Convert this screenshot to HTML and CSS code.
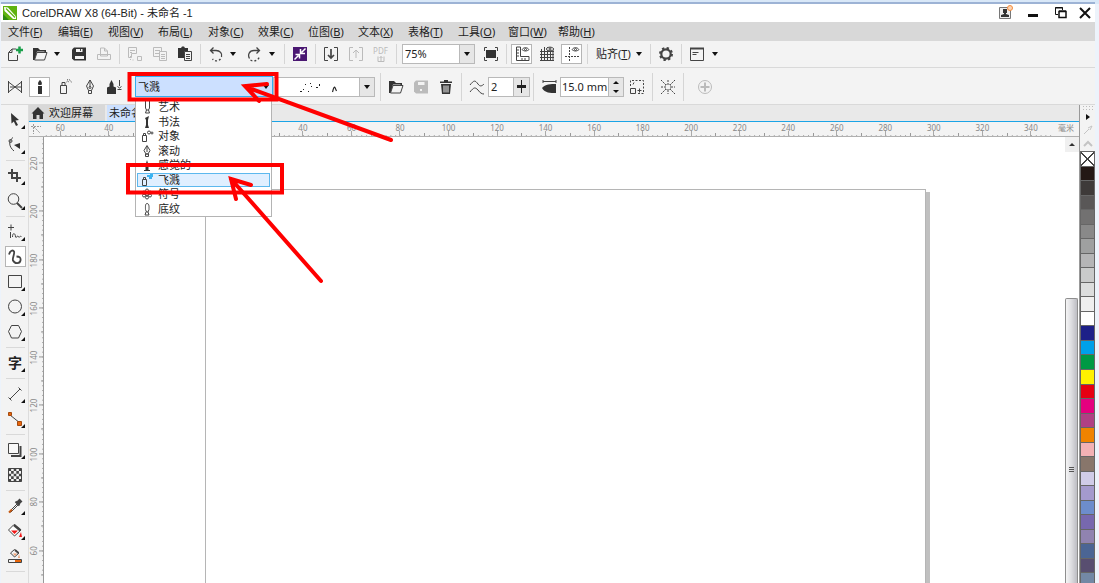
FILE: index.html
```html
<!DOCTYPE html>
<html lang="zh-CN">
<head>
<meta charset="utf-8">
<title>CorelDRAW X8 (64-Bit) - 未命名 -1</title>
<link rel="stylesheet" href="styles.css">
</head>
<body>
<div class="app">
  <header class="titlebar">
    <svg class="logo" viewBox="0 0 14 14"><path fill="#5fb30f" d="M0 0h14v14H0z"/><path fill="#fff" d="M1 1l4 0.500 8 9v2.500h-3L1.500 5z"/><path stroke="#5fb30f" stroke-width="1.200" d="M3 2.500l9 9"/><path fill="#2f8a12" d="M0 8l6 6H0z"/></svg>
    <h1 class="title">CorelDRAW X8 (64-Bit) - 未命名 -1</h1>
    <button class="win" aria-label="账户"><svg class="i" viewBox="0 0 20 20"><path class="g" d="M4.500 4.500h11v11h-11z" fill="#eee"/><path class="f" d="M8 6h4v4h-1v1l3 1v2H6v-2l3-1v-1H8z"/><circle cx="15" cy="5" r="2.500" fill="#fbd5b5" stroke="#f58b3c"/></svg></button>
    <button class="win" aria-label="最小化"><svg class="i" viewBox="0 0 20 20"><path class="k" stroke-width="3" d="M5 12.500h10"/></svg></button>
    <button class="win" aria-label="还原"><svg class="i" viewBox="0 0 20 20"><path class="k" d="M7 11.500H4.500v-7h7v2.500M4 5h8" /><path class="k" stroke-width="1.500" d="M8 8.500h7v6H8zM8 8h7"/></svg></button>
    <button class="win" aria-label="关闭"><svg class="i" viewBox="0 0 20 20"><path class="k" stroke-width="2" d="M5 5l10 10M15 5L5 15"/></svg></button>
  </header>
  <nav class="menubar">
    <button>文件(<u>F</u>)</button><button>编辑(<u>E</u>)</button><button>视图(<u>V</u>)</button><button>布局(<u>L</u>)</button><button>对象(<u>C</u>)</button><button>效果(<u>C</u>)</button><button>位图(<u>B</u>)</button><button>文本(<u>X</u>)</button><button>表格(<u>T</u>)</button><button>工具(<u>O</u>)</button><button>窗口(<u>W</u>)</button><button>帮助(<u>H</u>)</button>
  </nav>
  <div class="bar">
    <button class="b" aria-label="新建"><svg class="i" viewBox="0 0 20 20"><path d="M11 5H7L3.500 8.500v8h9V11M7 5v3.500H4"/><path stroke="#19a04a" stroke-width="2.500" d="M14.500 2.500v7M11 6h7"/></svg></button>
    <button class="b" aria-label="打开"><svg class="i" viewBox="0 0 20 20"><path class="f" d="M3 16V4h5l2 2h6v3h-1.500V7.500H7L5 16z"/><path d="M4.500 16L7 8.500h10L14.500 16z" fill="#f3f3f3"/></svg></button>
    <button class="arrow" aria-label="打开选项"></button>
    <button class="b" aria-label="保存"><svg class="i" viewBox="0 0 20 20"><path class="f" d="M5 3.500h12v13H5L3 14.500v-9z"/><path fill="#f3f3f3" stroke="none" d="M7 5h6.500v3H7zM6 12h9v3H6z"/><path d="M11.500 5v2"/></svg></button>
    <button class="b" aria-label="打印" disabled><svg class="i" viewBox="0 0 20 20"><path d="M3.500 10.500h13v5h-13zM6.500 10V4h4l3 3v5h-7zM10.500 4v3h3"/></svg></button>
    <span class="sep"></span>
    <button class="b" aria-label="剪切" disabled><svg class="i" viewBox="0 0 20 20"><path d="M3.500 3.500h8v6h-5v4h-3zM5 6.500h5M5 8.500h2M12.500 12.500h4v4h-4z"/><path stroke-dasharray="1 2" d="M5.500 12v4h5"/></svg></button>
    <button class="b" aria-label="复制" disabled><svg class="i" viewBox="0 0 20 20"><path d="M3.500 3.500h8v9h-8zM5 6.500h5M5 9.500h5"/><path fill="#f3f3f3" d="M9.500 7.500h7v9h-7zM11 10.500h4M11 12.500h4M11 14.500h4"/></svg></button>
    <button class="b" aria-label="粘贴"><svg class="i" viewBox="0 0 20 20"><path class="f" d="M3 4h3l1-1.500h2L10 4h3v10H3z"/><path fill="#f3f3f3" d="M9.500 7.500h7v9h-7zM11 10.500h4M11 12.500h4M11 14.500h4"/></svg></button>
    <span class="sep"></span>
    <button class="b" aria-label="撤消"><svg class="i" viewBox="0 0 20 20"><path stroke-width="1.300" d="M4.500 6.500H10c4 0 6.500 3 5.500 6.500M7.500 3.500l-3 3 3 3"/><path stroke-width="1.300" stroke-dasharray="2 2" d="M14.500 15c-2 2.500-6 2.500-8 0"/></svg></button>
    <button class="arrow" aria-label="撤消列表"></button>
    <button class="b" aria-label="重做"><svg class="i" viewBox="0 0 20 20"><path stroke-width="1.300" d="M14.500 6.500H9c-5 0-6.500 4.500-4.500 8M11.500 3.500l3 3-3 3"/><path stroke-width="1.300" stroke-dasharray="2 2" d="M5.500 16c3 2 7 1 9-3"/></svg></button>
    <button class="arrow" aria-label="重做列表"></button>
    <span class="sep"></span>
    <button class="b" aria-label="搜索内容"><svg class="i" viewBox="0 0 20 20"><path fill="#4a1772" stroke="none" d="M3 3h14v14H3z"/><path stroke="#fff" stroke-width="1.500" d="M4.500 15.500l4-4M15.500 4.500l-4 4M5.500 10.500h4v4M10.500 5v4.500h4.500"/></svg></button>
    <span class="sep"></span>
    <button class="b" aria-label="导入"><svg class="i" viewBox="0 0 20 20"><path d="M7 3.500H3.500v13H7M13 3.500h3.500v13H13"/><path stroke-width="1.700" d="M10 5v9M7 11l3 3 3-3"/></svg></button>
    <button class="b" aria-label="导出" disabled><svg class="i" viewBox="0 0 20 20"><path d="M7 3.500H3.500v13H7M13 3.500h3.500v13H13"/><path d="M10 14V6M7 9l3-3 3 3"/></svg></button>
    <button class="b pdf" disabled>PDF<svg class="mini" viewBox="0 0 8 7"><path d="M1 1.500v5h6v-5M4 6V1.500M2.500 3L4 1.500 5.500 3"/></svg></button>
    <span class="sep"></span>
    <div class="field zoom"><input aria-label="缩放级别" value="75%"><button class="drop" aria-label="缩放列表"></button></div>
    <button class="b" aria-label="全屏预览"><svg class="i" viewBox="0 0 20 20"><path class="f" d="M5 6h10v8H5z"/><path d="M3.500 7V3.500H6M14 3.500h2.500V7M16.500 13v3.500H14M6 16.500H3.500V13"/></svg></button>
    <span class="sep"></span>
    <button class="b on" aria-label="显示标尺"><svg class="i" viewBox="0 0 20 20"><path d="M4.500 3v13.500H17V12.500H8.500V3zM5 6h2M5 9h2M5 12h2M10 14v2M13 14v2"/><path d="M10 5.500c2-2.500 5-2.500 7 0-2 2-5 2-7 0z"/><circle cx="13.500" cy="5.500" r="1"/></svg></button>
    <button class="b" aria-label="显示网格"><svg class="i" viewBox="0 0 20 20"><path d="M3 7.500h14M3 10.500h14M3 13.500h14M3 16.500h14M4.500 5v12M7.500 3v14M10.500 3v14M13.500 3v14M16 5v12"/><path fill="#f3f3f3" d="M9 5c2-2.500 6-2.500 8 0-2 2.500-6 2.500-8 0z"/><circle cx="13" cy="5" r="1"/></svg></button>
    <button class="b on" aria-label="显示辅助线"><svg class="i" viewBox="0 0 20 20"><path stroke-dasharray="2 1" d="M3 12.500h14M7.500 3v14"/><path d="M10 5.500c2-2.500 5-2.500 7 0-2 2-5 2-7 0z"/><circle cx="13.500" cy="5.500" r="1"/></svg></button>
    <span class="sep"></span>
    <button class="snap">贴齐(<u>T</u>)</button>
    <button class="arrow" aria-label="贴齐选项"></button>
    <span class="sep"></span>
    <button class="b" aria-label="选项"><svg class="i" viewBox="0 0 20 20"><circle cx="10" cy="10" r="4.700" stroke-width="2.200"/><circle cx="10" cy="10" r="6" stroke-width="2" stroke-dasharray="2.350 2.350"/></svg></button>
    <span class="sep"></span>
    <button class="b" aria-label="应用程序启动器"><svg class="i" viewBox="0 0 20 20"><path d="M3.500 4.500h13v12h-13zM5.500 8.500h6M5.500 10.500h4" /><path stroke-width="2" d="M3 4.500h14"/></svg></button>
    <button class="arrow" aria-label="启动器列表"></button>
  </div>
  <div class="bar props">
    <button class="b" aria-label="预设"><svg class="i" viewBox="0 0 20 20"><path d="M3.500 4v12M3.500 5l6.500 5-6.500 5M16.500 4v12M16.500 5L10 10l6.500 5M5 10h11"/></svg></button>
    <button class="b on" aria-label="笔刷"><svg class="i" viewBox="0 0 20 20"><path class="f" d="M8 9h4v8H8zM10 3c2.500 2.500 2 3.500 1.500 5h-3C8 6.500 7.500 5.500 10 3z"/></svg></button>
    <button class="b" aria-label="喷涂"><svg class="i" viewBox="0 0 20 20"><path d="M5.500 8.500h6v8h-6zM7 8V5.500h3V8"/><path stroke-dasharray="1 1" d="M11.500 5c1-1 2-1 3 1M12 3c2-1 4 0 4.500 3"/></svg></button>
    <button class="b" aria-label="书法"><svg class="i" viewBox="0 0 20 20"><path d="M10 3L6.500 9l2 4.500h3l2-4.500zM10 3v7M8.500 13.500v3h3v-3"/><circle cx="10" cy="10.500" r="1"/></svg></button>
    <button class="b" aria-label="压力"><svg class="i" viewBox="0 0 20 20"><path class="f" d="M6.500 3l2 4v2.500l2.500 1V17H2v-6.500l2.500-1V7z"/><path d="M14.500 3v6M12.500 9.500l2 1.500 2-1.500M12.500 12.500h4"/></svg></button>
    <div class="category">
      <button class="combo" role="combobox" aria-expanded="true" aria-controls="kinds" aria-label="类别">飞溅</button>
      <ul class="list" id="kinds" role="listbox">
        <li role="option"><svg class="s" viewBox="0 0 14 14"><path d="M5.500 1v7l1 2h2l1-2V1M6.500 10l-1 3h4l-1-3"/></svg>艺术</li>
        <li role="option"><svg class="s" viewBox="0 0 14 14"><path class="f" d="M5 3l4-2-1 4v5l1 3H5l1-3V5z"/></svg>书法</li>
        <li role="option"><svg class="s" viewBox="0 0 14 14"><path d="M2.500 6.500h4v6h-4zM3.500 6V4.500h2V6"/><circle cx="9" cy="3.500" r="1.500"/><circle cx="12" cy="4" r="1"/></svg>对象</li>
        <li role="option"><svg class="s" viewBox="0 0 14 14"><path d="M7 1.500L4 6.500l2 3.500h2l2-3.500zM7 2v6M5.500 12.500h3V10h-3z"/></svg>滚动</li>
        <li role="option"><svg class="s" viewBox="0 0 14 14"><path class="f" d="M7 2l1.500 5v6h-3V7zM4 12h6v1H4z"/></svg>感觉的</li>
        <li role="option" aria-selected="true"><svg class="s" viewBox="0 0 14 14"><path d="M2.500 6.500h4v6h-4zM3.500 6V4.500h2V6"/><path fill="#3bb3f0" stroke="none" d="M7 2h3v2H7zM10 1h3v3h-3zM9 4h3v2H9z"/></svg>飞溅</li>
        <li role="option"><svg class="s" viewBox="0 0 14 14"><circle cx="7" cy="7" r="1.500"/><circle cx="7" cy="3.500" r="1.500"/><circle cx="7" cy="10.500" r="1.500"/><circle cx="4" cy="5.500" r="1.500"/><circle cx="10" cy="5.500" r="1.500"/><circle cx="4" cy="8.500" r="1.500"/><circle cx="10" cy="8.500" r="1.500"/></svg>符号</li>
        <li role="option"><svg class="s" viewBox="0 0 14 14"><path d="M7 1.500c-2 0-1.500 4-1.500 6l1 2.500h1.500l1-2.500c0-2 0.500-6-2-6zM6 10l-1 3h4l-1-3"/></svg>底纹</li>
      </ul>
    </div>
    <div class="field pattern"><button class="swatch" aria-label="喷射图样"><svg class="splash" viewBox="0 0 64 18"><path fill="#222" d="M15 13h2v1h-2zM20 6h1v1h-1zM18 11h1v1h-1zM23 13h1v1h-1zM25 5h1v1h-1zM26 8h1v1h-1zM34 6h1v2h-1zM31 9h2v1h-2z"/><path d="M47.500 14c1-3 1-5 2-5 1 1 1 2 2 4" fill="none" stroke="#222" stroke-width="1.200"/></svg></button><button class="drop" aria-label="图样列表"></button></div>
    <span class="sep"></span>
    <button class="b" aria-label="浏览"><svg class="i" viewBox="0 0 20 20"><path class="f" d="M3 16V4h5l2 2h6v3h-1.500V7.500H7L5 16z"/><path d="M4.500 16L7 8.500h10L14.500 16z" fill="#f3f3f3"/></svg></button>
    <button class="b" aria-label="保存笔触" disabled><svg class="i" viewBox="0 0 20 20"><path class="f" d="M5 3.500h12v13H5L3 14.500v-9z"/><path fill="#f3f3f3" stroke="none" d="M7 5h6.500v3H7zM9 12h2v2H9z"/></svg></button>
    <button class="b" aria-label="删除"><svg class="i" viewBox="0 0 20 20"><path class="f" d="M5 7h10l-1 10H6zM4 4.500h12V6H4zM8 3h4v1.500H8z"/><path stroke="#f3f3f3" d="M8 8.500v7M10 8.500v7M12 8.500v7"/></svg></button>
    <span class="sep"></span>
    <svg class="i lead" viewBox="0 0 20 20"><path d="M3 8c4-5 5-5 8-1 2 3 4 2 6 0M3 15c4-5 5-5 8-2 2 3 4 4 6 4"/></svg>
    <div class="field smooth"><input aria-label="手绘平滑" value="2"><button class="slide" aria-label="平滑滑块"></button></div>
    <span class="sep"></span>
    <svg class="i lead" viewBox="0 0 20 20"><path d="M4 4.500h13M4 3v3M17 3v3"/><path class="f" d="M3 11c3-4 9-4 14-4v9C11 16 6 16 3 11z"/></svg>
    <div class="field width"><input aria-label="笔触宽度" value="15.0 mm"><span class="spin"><button aria-label="增加"></button><button aria-label="减少"></button></span></div>
    <button class="b" aria-label="随对象缩放笔触"><svg class="i" viewBox="0 0 20 20"><path stroke-dasharray="2 1.500" d="M3.500 9V3.500h13v13H10"/><path d="M3.500 11.500h5v5h-5zM10.500 13.500h4M12.500 11.500v4M6 7.500l1-2"/></svg></button>
    <span class="sep"></span>
    <button class="b" aria-label="边框"><svg class="i" viewBox="0 0 20 20"><path stroke-dasharray="2 1" d="M3 3l5 5M17 3l-5 5M3 17l5-5M17 17l-5-5M10 3v4M10 13v4M3 10h4M13 10h4"/><path stroke-dasharray="1 1" d="M7.500 7.500h5v5h-5z"/></svg></button>
    <span class="sep"></span>
    <button class="b far" aria-label="添加" disabled><svg class="i" viewBox="0 0 20 20"><circle cx="10" cy="10" r="6.500"/><path stroke-width="2" d="M10 5.500v9M5.500 10h9"/></svg></button>
  </div>
  <div class="work">
    <aside class="toolbox">
      <button class="t more" aria-label="选择"><svg class="i" viewBox="0 0 20 20"><path class="f" d="M6 3l8 7-3.500 0.500L13 15l-2 1-2.200-4.500L6.500 13.500z"/></svg></button>
      <button class="t more" aria-label="形状"><svg class="i" viewBox="0 0 20 20"><path d="M8 2.500C3 6 4 12 9 16"/><circle cx="5.500" cy="6" r="1.500"/><path class="f" d="M9 10l6-2v6z"/></svg></button>
      <span class="hr"></span>
      <button class="t more" aria-label="裁剪"><svg class="i" viewBox="0 0 20 20"><path stroke-width="2" d="M3 7h9v9M7 3v9h9"/></svg></button>
      <button class="t more" aria-label="缩放"><svg class="i" viewBox="0 0 20 20"><circle cx="8.500" cy="8" r="5.300"/><path stroke-width="2" d="M12 12l5 5"/></svg></button>
      <span class="hr"></span>
      <button class="t more" aria-label="手绘"><svg class="i" viewBox="0 0 20 20"><path d="M3 5.500h6M6 2.500v6M5.500 10v6M7.500 15c0-5 3-4 3 0 1 2 2-3 3 0 1 1 2-2 3 0"/></svg></button>
      <button class="t on" aria-label="艺术笔"><svg class="i" viewBox="0 0 20 20"><path stroke-width="1.800" d="M4 7.500c1-4 4-5 5-3 1 2-2 7-1 9 2 4 7 3 7.500 0 0.500-3-1-4-4-4"/></svg></button>
      <button class="t more" aria-label="矩形"><svg class="i" viewBox="0 0 20 20"><path d="M3.500 3.500h13v12h-13z"/></svg></button>
      <button class="t more" aria-label="椭圆形"><svg class="i" viewBox="0 0 20 20"><circle cx="10" cy="9.500" r="6.500"/></svg></button>
      <button class="t more" aria-label="多边形"><svg class="i" viewBox="0 0 20 20"><path d="M6.500 3.500h7l3 6-3 6.500h-7l-3-6.500z"/></svg></button>
      <span class="hr"></span>
      <button class="t more glyph" aria-label="文本">字</button>
      <span class="hr"></span>
      <button class="t more" aria-label="平行度量"><svg class="i" viewBox="0 0 20 20"><path d="M5 15L15 5M3.500 13.500l3 3M13.500 3.500l3 3"/></svg></button>
      <button class="t more" aria-label="连接器"><svg class="i" viewBox="0 0 20 20"><path d="M5 6l10 8"/><path fill="#e8650a" stroke="#a34a10" d="M3.500 3.500h3v3h-3zM12.500 12.500h4v4h-4z"/></svg></button>
      <span class="hr"></span>
      <button class="t more" aria-label="阴影"><svg class="i" viewBox="0 0 20 20"><path stroke-width="2" d="M15.500 6v10H6"/><path d="M3.500 3.500h10v10h-10z" fill="#f8f8f8"/></svg></button>
      <button class="t" aria-label="透明度"><svg class="i" viewBox="0 0 20 20"><path d="M3.500 3.500h13v13h-13z"/><path stroke-width="2.600" stroke-dasharray="2.600 2.600" d="M3.500 4.800h13M3.500 10h13M3.500 15.200h13"/><path stroke-width="2.600" stroke-dasharray="2.600 2.600" stroke-dashoffset="2.600" d="M3.500 7.400h13M3.500 12.600h13"/></svg></button>
      <span class="hr"></span>
      <button class="t more" aria-label="颜色滴管"><svg class="i" viewBox="0 0 20 20"><path d="M4.500 15.500l8-8M5.500 16.500l8-8"/><path stroke="#c65a14" stroke-width="2" d="M4 16.500l3-3"/><path stroke-width="4" d="M12.500 7.500L16 4"/><path stroke-width="2" d="M10.500 5.500l4 4"/></svg></button>
      <button class="t more" aria-label="交互式填充"><svg class="i" viewBox="0 0 20 20"><path d="M9 3.500L3.500 9l6 6L16 9z" fill="#fff"/><path stroke-width="2.500" d="M9 4l6.500 5.500"/><path fill="#f01818" stroke="none" d="M6 9.500h7L9.500 13zM16 11l1 5h-3z"/></svg></button>
      <button class="t" aria-label="智能填充"><svg class="i" viewBox="0 0 20 20"><path d="M9.500 3.500L5.500 7l4 4 4.500-4z"/><path stroke-width="2" d="M10 4l3.500 3"/><path fill="#f0a070" stroke="none" d="M8 7.500h4l-2 2.500zM14 8l1 4h-2z"/><path d="M3.500 13.500h13v3h-13z"/><path fill="#e8650a" stroke="none" d="M10 14h6v2h-6z"/></svg></button>
      <span class="hr"></span>
    </aside>
    <main class="doc">
      <div class="tabs">
        <button class="tab"><svg class="home" viewBox="0 0 14 14"><path d="M7 1l6.500 6.500H12V13H8.500V9h-3v4H2V7.500H0.500z"/></svg>欢迎屏幕</button>
        <button class="tab current">未命名 -1</button>
      </div>
      <div class="hruler">
        <span class="corner"><svg class="s" viewBox="0 0 14 14"><path stroke="#999" stroke-dasharray="2 1" d="M2 4.500h10M4.500 2v10M5 5l6 6"/></svg></span>
        <div class="hscale"><span>60</span><span>40</span><span></span><span></span><span></span><span>40</span><span>60</span><span>80</span><span>100</span><span>120</span><span>140</span><span>160</span><span>180</span><span>200</span><span>220</span><span>240</span><span>260</span><span>280</span><span>300</span><span>320</span><span>340</span></div>
        <span class="unit">毫米</span>
      </div>
      <div class="stage">
        <div class="vruler"><span>220</span><span>200</span><span>180</span><span>160</span><span>140</span><span>120</span><span>100</span><span>80</span><span>60</span></div>
        <div class="canvas"><div class="page"></div></div>
        <div class="scroll"><button class="up" aria-label="向上滚动"></button><div class="thumb"></div></div>
      </div>
    </main>
    <aside class="palette">
      <span class="dots"></span>
      <button class="play" aria-label="调色板菜单"></button>
      <svg class="pi" viewBox="0 0 14 14"><path d="M3 11l5-5M7 5l4-2-2 4"/></svg>
      <svg class="pi" viewBox="0 0 14 14"><path stroke-width="2" d="M3 9l4-4 4 4"/></svg>
      <div class="colors">
        <i class="none"></i><i style="background:#231815"></i><i style="background:#3e3a39"></i><i style="background:#595757"></i><i style="background:#727171"></i><i style="background:#898989"></i><i style="background:#9fa0a0"></i><i style="background:#b5b5b6"></i><i style="background:#c9caca"></i><i style="background:#dcdddd"></i><i style="background:#efefef"></i><i style="background:#ffffff"></i><i style="background:#1d2088"></i><i style="background:#00a0e9"></i><i style="background:#009944"></i><i style="background:#fff100"></i><i style="background:#e60012"></i><i style="background:#e4007f"></i><i style="background:#b04084"></i><i style="background:#f08300"></i><i style="background:#f3b1b4"></i><i style="background:#88766b"></i><i style="background:#d0cce8"></i><i style="background:#a49acd"></i><i style="background:#6d8dcc"></i><i style="background:#7768ae"></i><i style="background:#9083b0"></i><i style="background:#4b6594"></i><i style="background:#584e70"></i><i style="background:#7388a5"></i>
      </div>
    </aside>
  </div>
</div>
<svg class="marks" aria-hidden="true">
  <path d="M129.500 74h147v25.500h-147zM128 165h154v27.500H128z"/>
  <path d="M391 140L246 87M267 84L245 86l14 15M321 281L231 179M251 185l-20-6 5 20"/>
</svg>
</body>
</html>
```
FILE: styles.css
```css
* { box-sizing: border-box; }
body {
  margin: 0;
  height: 100vh;
  overflow: hidden;
  background: #edf3fb;
  font: 11px/14px "Noto Sans", "Noto Sans CJK SC", sans-serif;
  color: #222;
}
button, input { font: inherit; color: inherit; margin: 0; padding: 0; border: 0; background: none; }
button { flex: none; }
.app {
  height: 100%;
  display: flex;
  flex-direction: column;
  padding: 0 4px 0 1px;
  border-top: 4px solid #d9e8f8;
}

/* title and menus */
.titlebar { flex: none; height: 18px; display: flex; align-items: center; background: #fff; padding: 0 0 0 2px; box-shadow: 0 -2px 0 #9db3d5; }
.logo { width: 14px; height: 14px; }
.title { flex: 1; margin: 0; padding-left: 5px; font-family: "Liberation Sans", "Noto Sans CJK SC", sans-serif; font-size: 11px; font-weight: 400; line-height: 18px; }
.win { width: 20px; height: 18px; margin-left: 8px; }
.win .i { display: block; margin-top: -1px; }
.win:last-child { margin-left: 4px; }
.menubar { flex: none; height: 19px; display: flex; padding-left: 7px; background: #d8d8d8; line-height: 19px; }
.menubar button { width: 50px; text-align: left; white-space: nowrap; }

/* icons */
.i { display: block; width: 20px; height: 20px; flex: none; margin: auto; }
.s { width: 14px; height: 14px; flex: none; }
.i, .s { fill: none; stroke: #444; }
.i .f, .s .f { fill: #333; stroke: none; }
.i .g { stroke: #777; }
.i .k { stroke: #111; }
button:disabled { color: #bbb; }
button:disabled .i { stroke: #bbb; }
button:disabled .i .f { fill: #bbb; }

/* toolbars */
.bar { flex: none; height: 27px; display: flex; align-items: center; padding-left: 1px; background: #f3f3f3; border-bottom: 1px solid #d9d9d9; }
.props { height: 37px; padding-top: 1px; }
.b { width: 25px; height: 20px; }
.b.on, .t.on { background: #fff; box-shadow: inset 0 0 0 1px #b5b5b5; }
.b.on { width: 21px; margin: 0 2px; }
.far { margin-left: 6px; }
.arrow { width: 10px; height: 20px; margin-right: 4px; }
.arrow::after, .drop::after, .combo::after, .spin button::after {
  content: ""; display: block; margin: auto; width: 0;
  border: solid transparent; border-width: 4px 3px 0; border-top-color: #111;
}
.sep { flex: none; width: 6px; height: 20px; background: linear-gradient(#d5d5d5, #d5d5d5) center / 1px 100% no-repeat; }
.props .sep { height: 28px; }
.pdf { font-size: 8px; line-height: 9px; }
.mini { display: block; width: 8px; height: 7px; margin: auto; fill: none; stroke: #bbb; }
.snap { padding: 0 3px 0 6px; }
.field { flex: none; display: flex; height: 20px; background: #fff; border: 1px solid #b9b9b9; }
.field input { flex: 1; min-width: 0; padding-left: 2px; outline: 0; }
.drop { width: 15px; background: #e6e6e6; border-left: 1px solid #b9b9b9; }
.zoom { width: 73px; margin: 0 3px; }
.pattern { width: 102px; margin-right: 2px; }
.swatch { flex: 1; display: flex; justify-content: center; }
.splash { width: 64px; height: 18px; }
.lead { margin: 0 1px 0 3px; }
.smooth { width: 42px; }
.slide { width: 16px; background: #e6e6e6; border-left: 1px solid #b9b9b9; }
.slide::after { content: ""; display: block; height: 13px; background: linear-gradient(#222, #222) center / 1px 100% no-repeat, linear-gradient(#222, #222) center / 9px 3px no-repeat; }
.width { width: 64px; }
.field.width input { padding-left: 1px; }
.spin { width: 15px; display: flex; flex-direction: column; background: #e6e6e6; border-left: 1px solid #b9b9b9; }
.spin button { flex: 1; }
.spin button::after { border-width: 3px 3px 0; }
.spin button:first-child::after { border-width: 0 3px 3px; border-bottom-color: #111; }

.category { position: relative; flex: none; width: 138px; margin-left: 8px; z-index: 2; }
.combo { width: 100%; height: 21px; display: flex; align-items: center; padding: 0 3px 0 2px; background: #cce0ff; border: 1px solid #35adf0; text-align: left; }
.combo::after { margin-right: 0; }
.list { position: absolute; top: 23px; left: 0; width: 137px; height: 118px; margin: 0; padding: 0; list-style: none; display: grid; grid-auto-rows: 1fr; background: #fff; border: 1px solid #b4b4b4; }
.list li { display: flex; align-items: center; gap: 4px; min-height: 0; margin: 0 1px; padding-left: 3px; line-height: 14px; }
.list li[aria-selected] { background: #e0efff; box-shadow: inset 0 0 0 1px #5cb8ee; }

/* toolbox */
.work { flex: 1; min-height: 0; display: flex; }
.toolbox { flex: none; width: 28px; display: flex; flex-direction: column; align-items: center; padding: 2px 0 0 1px; background: #f3f3f3; border-right: 1px solid #dcdcdc; overflow: hidden; }
.t { position: relative; width: 21px; height: 25px; }
.t.on { height: 21px; margin: 2px 0; }
.more::after { content: ""; position: absolute; right: 1px; bottom: 3px; border: solid transparent; border-width: 0 0 4px 4px; border-bottom-color: #111; }
.hr { flex: none; width: 19px; height: 6px; background: linear-gradient(#d9d9d9, #d9d9d9) center / 100% 1px no-repeat; }
.glyph { font-size: 14px; font-weight: 700; line-height: 20px; }

/* document */
.doc { flex: 1; min-width: 0; display: flex; flex-direction: column; }
.tabs { flex: none; height: 17px; display: flex; gap: 2px; background: #e9e9e9; border-bottom: 1px solid #1ba4e6; }
.tab { display: flex; align-items: center; gap: 4px; padding: 0 12px 0 2px; background: #d8d8d8; }
.current { background: #cce0ff; }
.home { width: 14px; height: 14px; fill: #333; }
.hruler { flex: none; height: 15px; display: flex; background: #f3f3f3; border-bottom: 1px solid #b0b0b0; color: #888; font-size: 8px; line-height: 12px; }
.corner { width: 15px; background: #f3f3f3; z-index: 1; }
.hscale { flex: 1; display: flex; margin-left: -8px; }
.hscale span {
  flex: 1; text-align: center;
  background:
    linear-gradient(#aaa, #aaa) 50% 100% / 1px 5px no-repeat,
    linear-gradient(#999, #999) 0 100% / 1px 3px no-repeat,
    linear-gradient(90deg, #aaa 1px, transparent 1px) 0 100% / 10% 1px repeat-x;
}
.unit { flex: none; width: 24px; padding-left: 3px; }
.stage { flex: 1; min-height: 0; display: flex; }
.vruler { flex: none; width: 15px; display: flex; flex-direction: column; padding: 2px 0 8px; background: #f3f3f3; border-right: 1px solid #999; color: #888; font-size: 8px; line-height: 10px; }
.vruler span {
  flex: 1; writing-mode: vertical-rl; transform: rotate(180deg); text-align: center;
  background:
    linear-gradient(#999, #999) 0 50% / 4px 1px no-repeat,
    linear-gradient(#999, #999) 0 0 / 2px 1px no-repeat,
    linear-gradient(#aaa 1px, transparent 1px) 0 0 / 1px 10% repeat-y;
}
.canvas { flex: 1; display: flex; padding: 52px 139px 0 161px; background: #fff; }
.page { flex: 1; border: solid #b5b5b5; border-width: 1px 1px 0; box-shadow: 4px 3px 0 #c0c0c0; background: #fff; }
.scroll { flex: none; width: 14px; display: flex; flex-direction: column; justify-content: space-between; background: #fff; }
.up { height: 15px; background: #f0f0f0; }
.up::after { content: ""; display: block; width: 0; margin: auto; border: solid transparent; border-width: 0 3px 3px; border-bottom-color: #333; }
.thumb { width: 13px; height: 64%; border: 1px solid #8e8e8e; border-bottom: 0; border-radius: 2px 2px 0 0; background: linear-gradient(#555, #555) 50% 170px / 5px 1px no-repeat, linear-gradient(#555, #555) 50% 172px / 5px 1px no-repeat, linear-gradient(#555, #555) 50% 168px / 5px 1px no-repeat, linear-gradient(90deg, #f5f5f5, #dcdce0 50%, #bdbdc3); }

/* palette */
.palette { flex: none; width: 16px; display: flex; flex-direction: column; align-items: center; background: #f3f3f3; border-left: 1px solid #999; }
.dots { flex: none; width: 12px; height: 6px; background: radial-gradient(#bbb 1px, transparent 1px) 0 0 / 3px 3px; }
.play { width: 14px; height: 12px; }
.play::after { content: ""; display: block; width: 0; margin: auto; border: solid transparent; border-width: 3px 0 3px 4px; border-left-color: #111; }
.pi { flex: none; width: 14px; height: 14px; fill: none; stroke: #c4c4c4; }
.colors { flex: 1; align-self: stretch; min-height: 0; display: flex; flex-direction: column; margin-bottom: -4px; }
.colors i { flex: 1; border: 1px solid #666; border-bottom: 0; }
.none { background: linear-gradient(45deg, transparent 47%, #444 47% 53%, transparent 53%), linear-gradient(-45deg, #fff 47%, #444 47% 53%, #fff 53%); }

/* annotations laid over the window */
.marks { position: absolute; inset: 0; width: 100%; height: 100%; z-index: 5; pointer-events: none; fill: none; stroke: #f00; stroke-width: 4px; stroke-linecap: round; }
```
